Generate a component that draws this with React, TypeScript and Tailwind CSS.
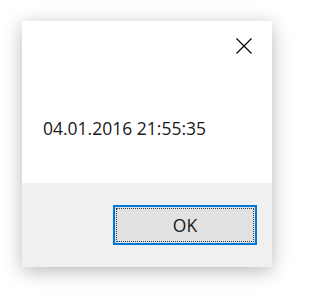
import React from 'react';

const CloseIcon: React.FC = () => (
  <svg width="16" height="16" viewBox="0 0 16 16" className="block">
    <path d="M0.5 0.5 L15.5 15.5 M15.5 0.5 L0.5 15.5" stroke="#000" strokeWidth="1.2" fill="none" />
  </svg>
);

const App: React.FC = () => {
  return (
    <div className="w-[300px] h-[296px] bg-white pl-[22px] pt-[21px] font-['Open_Sans','Noto_Sans',sans-serif] text-black">
      <div className="w-[250px] h-[246px] flex flex-col bg-white shadow-[0_4px_18px_rgba(0,0,0,0.28)]">
        {/* body */}
        <div className="h-[162px] flex flex-col bg-white">
          <div className="flex justify-end pt-[17px] pr-[20px]">
            <CloseIcon />
          </div>
          <div className="pt-[62px] pl-[21px] text-[17.5px] leading-[24px] text-[#1a1a1a]">
            04.01.2016 21:55:35
          </div>
        </div>
        {/* footer */}
        <div className="flex-1 bg-[#f0f0f0] flex justify-end items-start pt-[22px] pr-[15px]">
          <button className="relative w-[144px] h-[40px] bg-[#e1e1e1] border-2 border-[#0078d7] flex items-center justify-center text-[17.5px] leading-[24px] text-[#1a1a1a]">
            <span className="absolute inset-[1px] border border-dotted border-[#3c3c3c]" />
            <span className="relative">OK</span>
          </button>
        </div>
      </div>
    </div>
  );
};

export default App;
